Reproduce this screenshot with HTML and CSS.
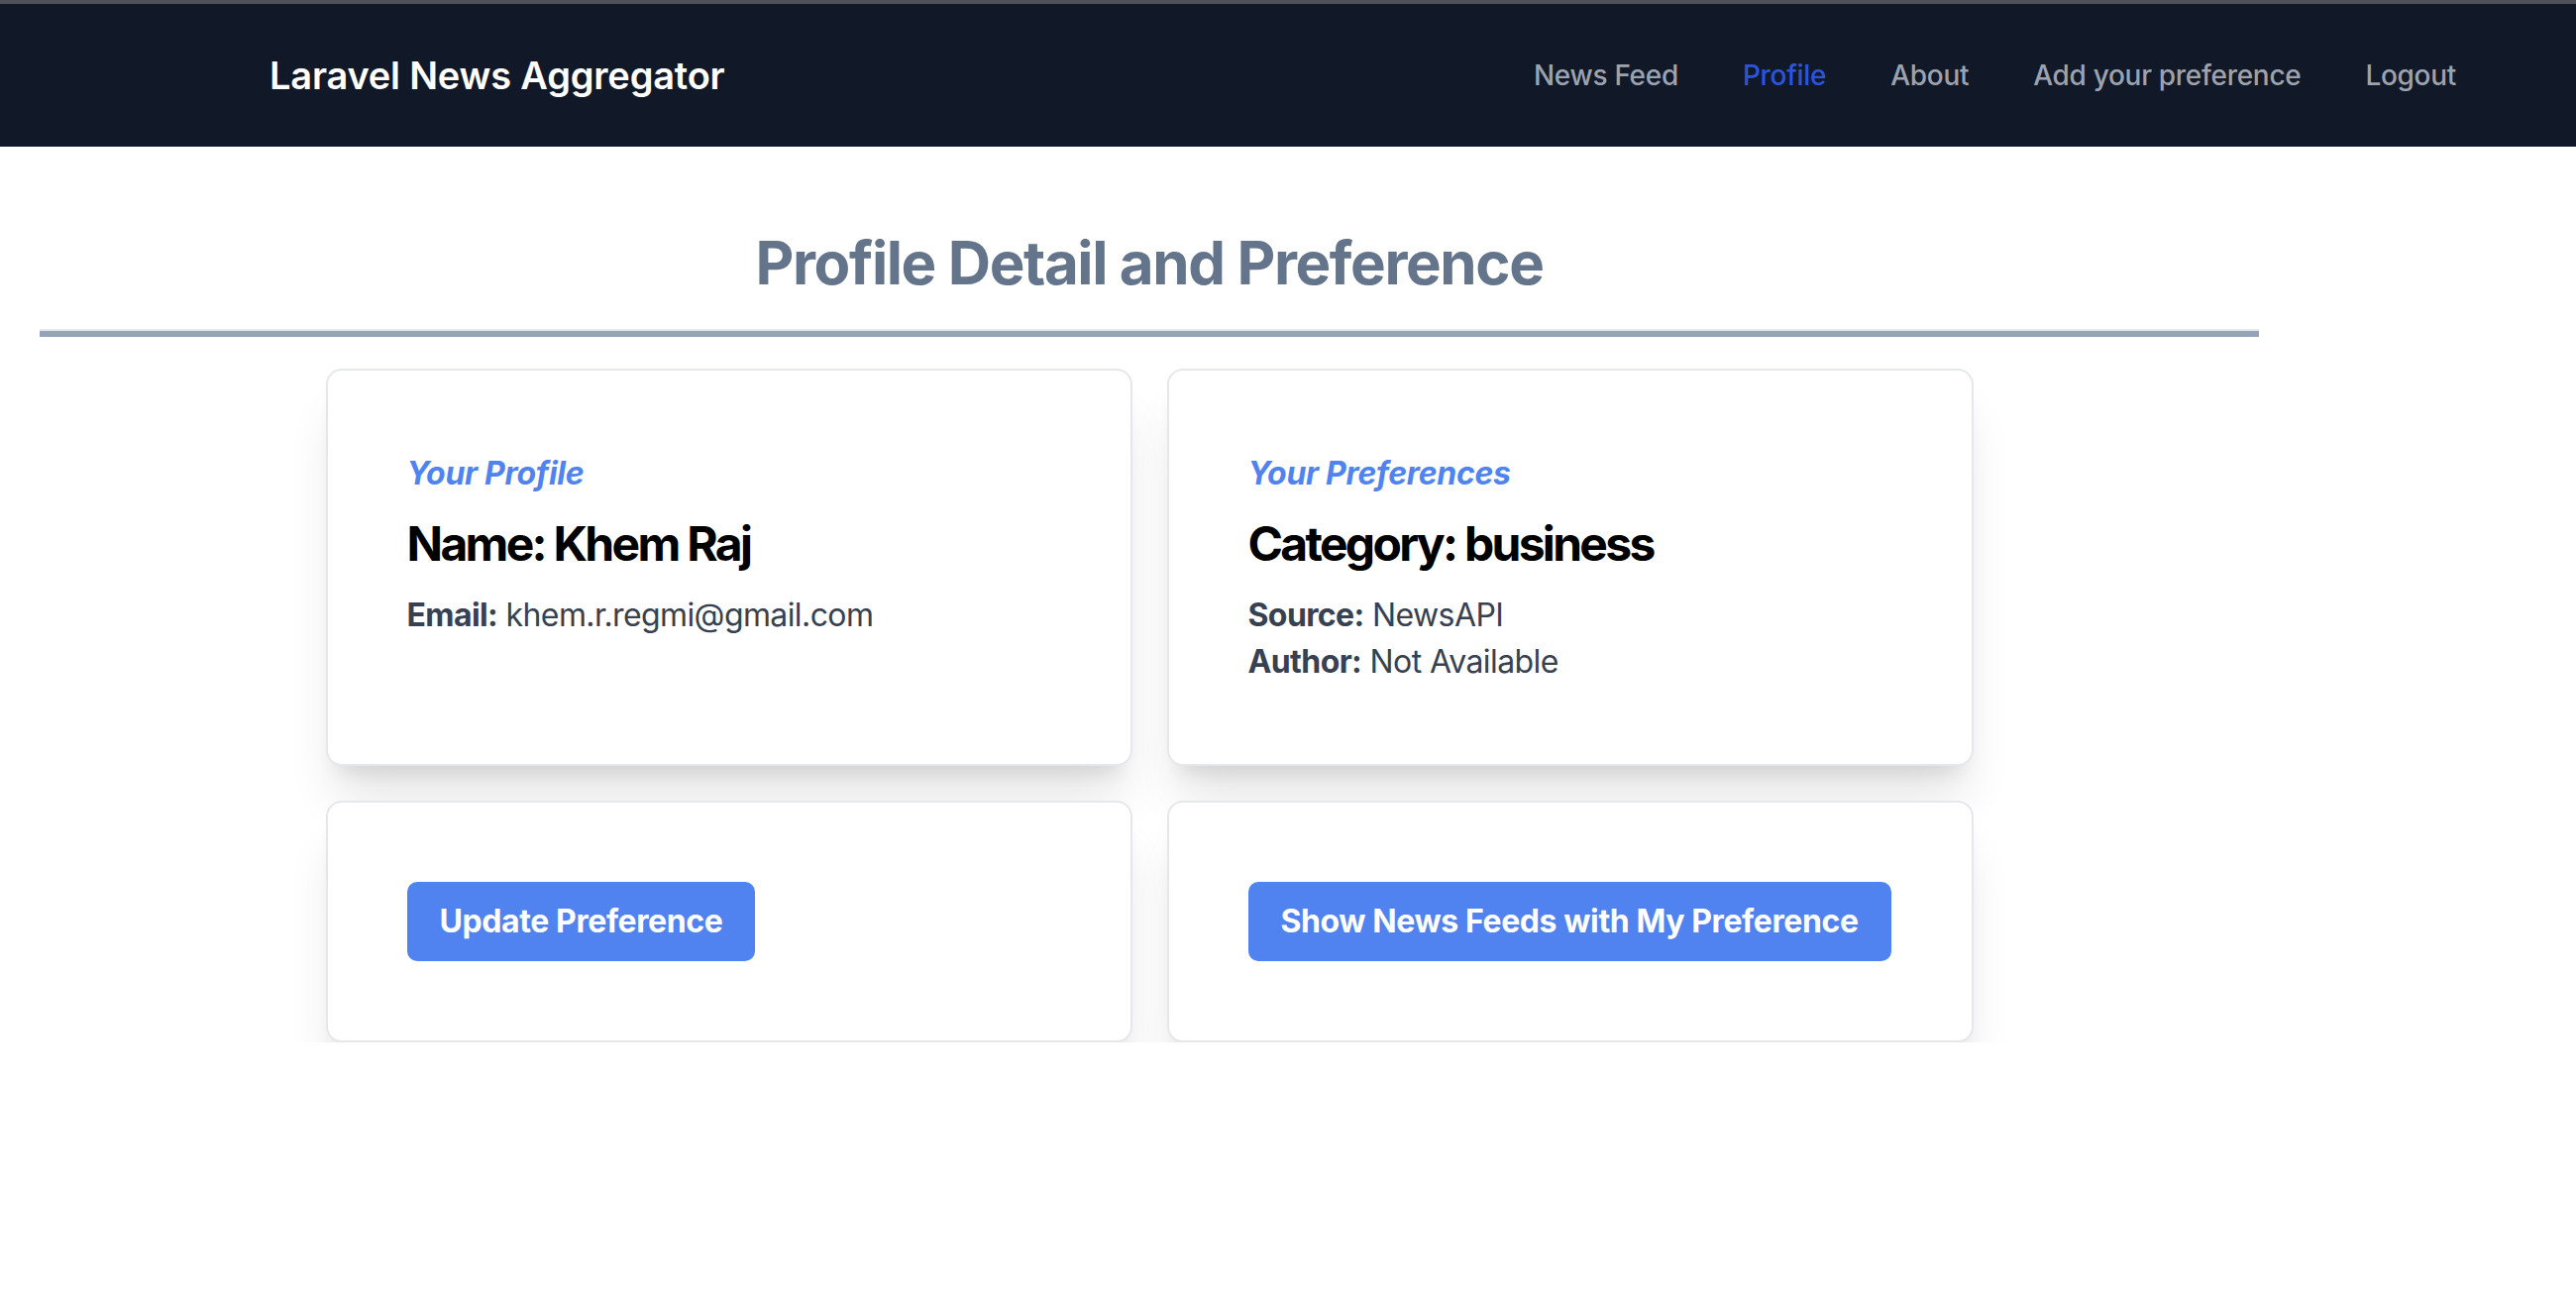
FILE: index.html
```html
<!DOCTYPE html>
<html lang="en">
<head>
<meta charset="utf-8">
<title>Profile Detail and Preference</title>
<link rel="stylesheet" href="styles.css">
</head>
<body>
<nav class="navbar">
  <a class="brand" href="#">Laravel News Aggregator</a>
  <ul class="nav-links">
    <li><a href="#">News Feed</a></li>
    <li><a href="#" class="active">Profile</a></li>
    <li><a href="#">About</a></li>
    <li><a href="#">Add your preference</a></li>
    <li><a href="#">Logout</a></li>
  </ul>
</nav>
<main class="page">
  <h1 class="page-title">Profile Detail and Preference</h1>
  <hr class="rule">
  <div class="card-grid">
    <section class="card">
      <p class="card-label">Your Profile</p>
      <h2 class="card-title">Name: Khem Raj</h2>
      <p class="info"><strong>Email:</strong> khem.r.regmi@gmail.com</p>
    </section>
    <section class="card">
      <p class="card-label">Your Preferences</p>
      <h2 class="card-title">Category: business</h2>
      <p class="info"><strong>Source:</strong> NewsAPI</p>
      <p class="info"><strong>Author:</strong> Not Available</p>
    </section>
    <section class="card">
      <a class="btn" href="#">Update Preference</a>
    </section>
    <section class="card">
      <a class="btn" href="#">Show News Feeds with My Preference</a>
    </section>
  </div>
</main>
</body>
</html>
```
FILE: styles.css
```css
* { box-sizing: border-box; }
html, body { margin: 0; padding: 0; background: #ffffff; }
body {
  font-family: Inter, "Noto Sans", "Liberation Sans", sans-serif;
  color: #111827;
}
a { text-decoration: none; }

.navbar {
  height: 148px;
  border-top: 4px solid #4e5156;
  background: #111827;
  display: flex;
  align-items: center;
  justify-content: space-between;
  padding: 0 121px 0 272px;
}
.brand {
  color: #ffffff;
  font-size: 38px;
  font-weight: 600;
  letter-spacing: -0.2px;
}
.nav-links {
  list-style: none;
  margin: 0;
  padding: 0;
  display: flex;
  gap: 65px;
}
.nav-links a {
  color: #9ca3af;
  font-size: 28px;
  font-weight: 500;
  letter-spacing: -0.3px;
}
.nav-links a.active { color: #2c55d6; }

.page {
  width: 2240px;
  margin: 0 0 0 40px;
  padding-top: 81px;
}
.page-title {
  margin: 0;
  text-align: center;
  font-size: 60px;
  line-height: 72px;
  font-weight: 700;
  color: #64748b;
  letter-spacing: -1.4px;
}
.rule {
  margin: 31px 0 0;
  height: 8px;
  border: 0;
  border-top: 2px solid #e5e7eb;
  background: #94a3b8;
}
.card-grid {
  width: 1663px;
  margin: 32px auto 0;
  display: grid;
  grid-template-columns: 1fr 1fr;
  gap: 35px;
}
.card {
  background: #ffffff;
  border: 2px solid #e5e7eb;
  border-radius: 16px;
  padding: 80px;
  box-shadow: 0 40px 50px -10px rgba(0,0,0,0.11), 0 16px 20px -12px rgba(0,0,0,0.11);
}
.card-label {
  margin: 0 0 15px;
  font-size: 32px;
  line-height: 48px;
  font-style: italic;
  font-weight: 700;
  color: #4f83f0;
  letter-spacing: -0.3px;
}
.card-title {
  margin: 0 0 16px;
  font-size: 48px;
  line-height: 64px;
  font-weight: 700;
  color: #000000;
  letter-spacing: -2.7px;
}
.info {
  margin: 0;
  font-size: 32px;
  line-height: 47px;
  color: #374151;
  letter-spacing: -0.6px;
}
.info strong { font-weight: 700; }
.btn {
  display: inline-block;
  white-space: nowrap;
  background: #5083ef;
  color: #ffffff;
  font-size: 32px;
  line-height: 48px;
  font-weight: 700;
  padding: 16px 33px;
  border-radius: 10px;
  letter-spacing: -0.4px;
}
```
